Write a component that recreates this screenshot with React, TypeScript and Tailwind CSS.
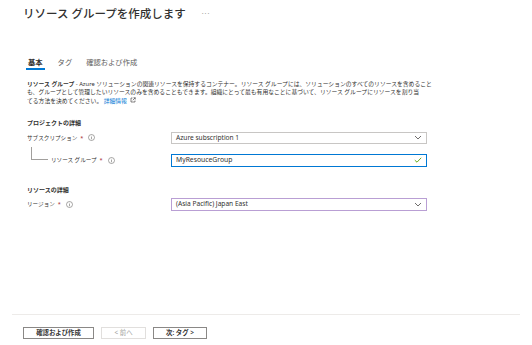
import React from "react";

const Info = () => (
  <svg width="7" height="7" viewBox="0 0 14 14" className="shrink-0">
    <circle cx="7" cy="7" r="6" fill="none" stroke="#605e5c" strokeWidth="1.1" />
    <rect x="6.45" y="6" width="1.1" height="4.5" fill="#605e5c" />
    <circle cx="7" cy="4.1" r="0.8" fill="#605e5c" />
  </svg>
);

const Chevron = () => (
  <svg width="8" height="5" viewBox="0 0 8 5" className="shrink-0">
    <path d="M1 1 L4 4 L7 1" fill="none" stroke="#605e5c" strokeWidth="0.9" />
  </svg>
);

const Check = () => (
  <svg width="8" height="6" viewBox="0 0 8 6" className="shrink-0">
    <path d="M0.8 3.2 L3 5.2 L7.2 0.8" fill="none" stroke="#57a300" strokeWidth="0.9" />
  </svg>
);

const ExtLink = () => (
  <svg width="6" height="6" viewBox="0 0 12 12" className="inline-block align-[-0.5px] ml-[3px]">
    <path d="M5 2 H2 V10 H10 V7" fill="none" stroke="#323130" strokeWidth="1.2" />
    <path d="M7 1.5 H10.5 V5 M10.5 1.5 L5.5 6.5" fill="none" stroke="#323130" strokeWidth="1.2" />
  </svg>
);

const Req = () => <span className="text-[#a4262c] ml-[3px]">*</span>;

export default function App() {
  return (
    <div className="w-[532px] h-[345px] bg-white flex flex-col text-[#323130] font-[family-name:Noto_Sans,Noto_Sans_CJK_JP,sans-serif] overflow-hidden">
      {/* Title */}
      <div className="pt-[7px] pl-[23px] flex items-center h-[21px]">
        <div className="text-[11.5px] leading-[14px] font-medium whitespace-nowrap">
          リソース グループを作成します
        </div>
        <div className="ml-[16px] text-[7px] leading-[14px] text-[#a19f9d] tracking-[1px]">···</div>
      </div>

      {/* Tabs */}
      <div className="mt-[35px] pl-[26px] flex gap-[12px] text-[7.3px]">
        <div className="flex flex-col">
          <div className="leading-[12px] px-[2px] font-semibold">基本</div>
          <div className="h-[2px] bg-[#0078d4]" />
        </div>
        <div className="leading-[12px] px-[1px] text-[#605e5c]">タグ</div>
        <div className="leading-[12px] px-[1px] text-[#605e5c]">確認および作成</div>
      </div>

      {/* Description */}
      <div className="mt-[10px] pl-[27px] text-[5.8px] leading-[8.3px] whitespace-nowrap">
        <div>
          <span className="font-bold">リソース グループ</span> - Azure ソリューションの関連リソースを保持するコンテナー。リソース グループには、ソリューションのすべてのリソースを含めること
        </div>
        <div>
          も、グループとして管理したいリソースのみを含めることもできます。組織にとって最も有用なことに基づいて、リソース グループにリソースを割り当
        </div>
        <div>
          てる方法を決めてください。 <span className="text-[#0078d4]">詳細情報</span>
          <ExtLink />
        </div>
      </div>

      {/* Project details */}
      <div className="mt-[13px] pl-[27px] text-[6px] leading-[10px] font-bold">プロジェクトの詳細</div>

      <div className="mt-[4px] pl-[27px] flex items-center h-[12px]">
        <div className="w-[144px] flex items-center text-[5.6px] text-[#323130]">
          <span>サブスクリプション</span>
          <Req />
          <span className="ml-[5px]"><Info /></span>
        </div>
        <div className="w-[256px] h-[12px] border border-[#c8c6c4] flex items-center justify-between pl-[4px] pr-[4px] text-[6.6px]">
          <span>Azure subscription 1</span>
          <Chevron />
        </div>
      </div>

      <div className="mt-[10px] pl-[27px] flex items-center h-[13px]">
        <div className="w-[144px] flex items-center text-[5.6px] relative">
          <span className="absolute left-[4px] top-[-9px] w-[17px] h-[13px] border-l border-b border-[#a19f9d]" />
          <span className="ml-[24px]">リソース グループ</span>
          <Req />
          <span className="ml-[5px]"><Info /></span>
        </div>
        <div className="w-[256px] h-[13px] border border-[#0078d4] flex items-center justify-between pl-[4px] pr-[4px] text-[6.8px]">
          <span>MyResouceGroup</span>
          <Check />
        </div>
      </div>

      {/* Resource details */}
      <div className="mt-[18px] pl-[27px] text-[6px] leading-[10px] font-bold">リソースの詳細</div>

      <div className="mt-[3px] pl-[27px] flex items-center h-[13px]">
        <div className="w-[144px] flex items-center text-[5.6px]">
          <span>リージョン</span>
          <Req />
          <span className="ml-[5px]"><Info /></span>
        </div>
        <div className="w-[256px] h-[13px] border border-[#b99fd4] flex items-center justify-between pl-[4px] pr-[4px] text-[6.6px]">
          <span>(Asia Pacific) Japan East</span>
          <Chevron />
        </div>
      </div>

      {/* Footer */}
      <div className="mt-auto mx-[12px] border-t border-[#edebe9] pt-[12px] pb-[6px] pl-[11px] flex gap-[7px]">
        <div className="w-[71px] h-[12px] border border-[#8a8886] flex items-center justify-center text-[6.4px] font-semibold">
          確認および作成
        </div>
        <div className="w-[45px] h-[12px] border border-[#e1dfdd] flex items-center justify-center text-[6.4px] text-[#a19f9d]">
          &lt; 前へ
        </div>
        <div className="w-[54px] h-[12px] border border-[#8a8886] flex items-center justify-center text-[6.4px] font-semibold">
          次: タグ &gt;
        </div>
      </div>
    </div>
  );
}
